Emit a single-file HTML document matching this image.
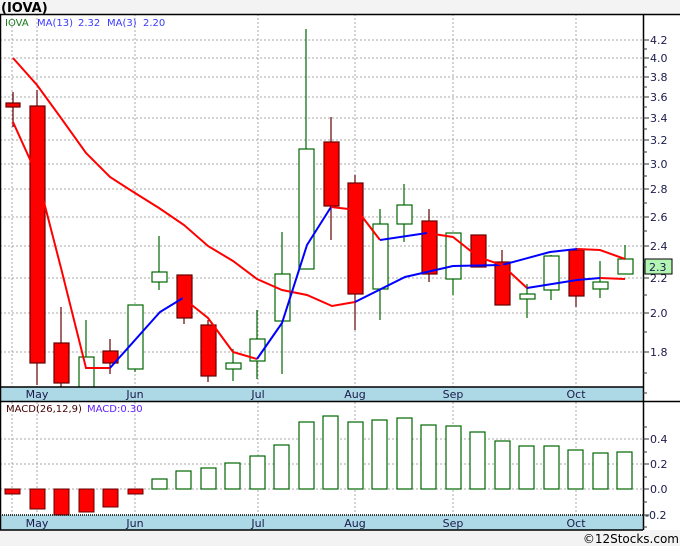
<!DOCTYPE html><html><head><style>body{margin:0;background:#f3f3f3}svg{display:block;font-family:"DejaVu Sans","Liberation Sans",sans-serif}</style></head><body>
<svg width="680" height="546" xmlns="http://www.w3.org/2000/svg">
<rect width="680" height="546" fill="#f3f3f3"/>
<text x="1" y="12" font-size="13" font-weight="bold" fill="#000">(IOVA)</text>
<rect x="0" y="14" width="680" height="516" fill="#fff"/>
<g stroke="#aaa" stroke-dasharray="2,2" stroke-width="1">
<line x1="0" x2="643" y1="40" y2="40"/><line x1="0" x2="643" y1="58" y2="58"/><line x1="0" x2="643" y1="77" y2="77"/><line x1="0" x2="643" y1="97" y2="97"/><line x1="0" x2="643" y1="118" y2="118"/><line x1="0" x2="643" y1="140" y2="140"/><line x1="0" x2="643" y1="164" y2="164"/><line x1="0" x2="643" y1="189" y2="189"/><line x1="0" x2="643" y1="217" y2="217"/><line x1="0" x2="643" y1="246" y2="246"/><line x1="0" x2="643" y1="278" y2="278"/><line x1="0" x2="643" y1="313" y2="313"/><line x1="0" x2="643" y1="352" y2="352"/>
<line x1="12" x2="12" y1="14" y2="387"/><line x1="37" x2="37" y1="14" y2="387"/><line x1="135" x2="135" y1="14" y2="387"/><line x1="258" x2="258" y1="14" y2="387"/><line x1="355" x2="355" y1="14" y2="387"/><line x1="453" x2="453" y1="14" y2="387"/><line x1="576" x2="576" y1="14" y2="387"/>
<line x1="0" x2="643" y1="439" y2="439"/><line x1="0" x2="643" y1="464" y2="464"/><line x1="0" x2="643" y1="489" y2="489"/>
<line x1="12" x2="12" y1="402" y2="515"/><line x1="37" x2="37" y1="402" y2="515"/><line x1="135" x2="135" y1="402" y2="515"/><line x1="258" x2="258" y1="402" y2="515"/><line x1="355" x2="355" y1="402" y2="515"/><line x1="453" x2="453" y1="402" y2="515"/><line x1="576" x2="576" y1="402" y2="515"/>
</g>
<text x="5" y="26" font-size="10" fill="#1a7a1a">IOVA</text>
<text x="37" y="26" font-size="10" fill="#3a3aff">MA(13)</text><text x="78" y="26" font-size="10" fill="#3a3aff">2.32</text>
<text x="107" y="26" font-size="10" fill="#3a3aff">MA(3)</text><text x="143" y="26" font-size="10" fill="#3a3aff">2.20</text>
<g stroke-width="1.2">
<g stroke="#600" fill="#f00">
<line x1="13" x2="13" y1="92" y2="127"/><rect x="6" y="103" width="14" height="4"/>
<line x1="37" x2="37" y1="90" y2="385"/><rect x="30" y="106" width="15" height="257"/>
<line x1="61" x2="61" y1="307" y2="387"/><rect x="54" y="343" width="15" height="40"/>
<line x1="110" x2="110" y1="339" y2="374"/><rect x="103" y="351" width="15" height="12"/>
<line x1="184" x2="184" y1="275" y2="324"/><rect x="177" y="275" width="15" height="43"/>
<line x1="208" x2="208" y1="320" y2="382"/><rect x="201" y="325" width="15" height="51"/>
<line x1="331" x2="331" y1="117" y2="240"/><rect x="324" y="142" width="15" height="64"/>
<line x1="355" x2="355" y1="175" y2="330"/><rect x="348" y="183" width="15" height="111"/>
<line x1="429" x2="429" y1="209" y2="282"/><rect x="422" y="221" width="15" height="53"/>
<line x1="478" x2="478" y1="235" y2="267"/><rect x="471" y="235" width="15" height="32"/>
<line x1="502" x2="502" y1="250" y2="305"/><rect x="495" y="262" width="15" height="43"/>
<line x1="576" x2="576" y1="250" y2="307"/><rect x="569" y="250" width="15" height="46"/>
</g>
<g stroke="#060" fill="#fff">
<line x1="86" x2="86" y1="320" y2="387"/><rect x="79" y="357" width="15" height="32"/>
<line x1="135" x2="135" y1="305" y2="372"/><rect x="128" y="305" width="15" height="64"/>
<line x1="159" x2="159" y1="236" y2="290"/><rect x="152" y="272" width="15" height="10"/>
<line x1="233" x2="233" y1="349" y2="381"/><rect x="226" y="363" width="15" height="6"/>
<line x1="257" x2="257" y1="310" y2="379"/><rect x="250" y="339" width="15" height="22"/>
<line x1="282" x2="282" y1="232" y2="374"/><rect x="275" y="274" width="15" height="47"/>
<line x1="306" x2="306" y1="29" y2="269"/><rect x="299" y="149" width="15" height="120"/>
<line x1="380" x2="380" y1="209" y2="320"/><rect x="373" y="224" width="15" height="65"/>
<line x1="404" x2="404" y1="184" y2="242"/><rect x="397" y="205" width="15" height="19"/>
<line x1="453" x2="453" y1="233" y2="295"/><rect x="446" y="233" width="15" height="46"/>
<line x1="527" x2="527" y1="284" y2="318"/><rect x="520" y="294" width="15" height="5"/>
<line x1="551" x2="551" y1="255" y2="300"/><rect x="544" y="256" width="15" height="34"/>
<line x1="600" x2="600" y1="261" y2="298"/><rect x="593" y="282" width="15" height="7"/>
<line x1="625" x2="625" y1="245" y2="259"/><rect x="618" y="259" width="15" height="15"/>
</g></g>
<g fill="none" stroke-width="2">
<polyline stroke="#f00" points="13,58 37,85 61,118 86,153 110,177 135,193 159,208 184,225 208,246 233,261 257,279 282,290 307,295 332,306 355,302"/>
<polyline stroke="#00f" points="355,302 405,277 453,266 502,265 550,252 577,249"/>
<polyline stroke="#f00" points="577,249 600,250 625,259"/>
<polyline stroke="#f00" points="13,122 37,175 61,268 86,368 110,368"/>
<polyline stroke="#00f" points="110,368 160,312 183,298"/>
<polyline stroke="#f00" points="183,298 208,318 233,352 257,359"/>
<polyline stroke="#00f" points="257,359 282,323 307,245 331,207"/>
<polyline stroke="#f00" points="331,207 357,210 380,240"/>
<polyline stroke="#00f" points="380,240 427,233"/>
<polyline stroke="#f00" points="427,233 453,237 472,252 487,260 502,265 527,288"/>
<polyline stroke="#00f" points="527,288 577,280 600,278"/>
<polyline stroke="#f00" points="600,278 625,279"/>
</g>
<rect x="0" y="387" width="643" height="14" fill="#add8e6"/>
<rect x="0" y="515" width="643" height="15" fill="#add8e6"/>
<g font-size="11" fill="#1a1a4a" text-anchor="middle">
<text x="37" y="398">May</text><text x="135" y="398">Jun</text><text x="258" y="398">Jul</text><text x="355" y="398">Aug</text><text x="453" y="398">Sep</text><text x="576" y="398">Oct</text>
<text x="37" y="527">May</text><text x="135" y="527">Jun</text><text x="258" y="527">Jul</text><text x="355" y="527">Aug</text><text x="453" y="527">Sep</text><text x="576" y="527">Oct</text>
</g>
<text x="6" y="412" font-size="10" fill="#400">MACD(26,12,9)</text><text x="87" y="412" font-size="10" fill="#6020ff">MACD:0.30</text>
<g stroke="#600" fill="#f00" stroke-width="1">
<rect x="5" y="489" width="15" height="5"/><rect x="30" y="489" width="15" height="20"/><rect x="54" y="489" width="15" height="26"/><rect x="79" y="489" width="15" height="23"/><rect x="103" y="489" width="15" height="18"/><rect x="128" y="489" width="15" height="5"/>
</g>
<g stroke="#060" fill="#fff" stroke-width="1.2">
<rect x="152" y="479" width="15" height="10"/><rect x="176" y="471" width="15" height="18"/><rect x="201" y="468" width="15" height="21"/><rect x="225" y="463" width="15" height="26"/><rect x="250" y="456" width="15" height="33"/><rect x="274" y="445" width="15" height="44"/><rect x="299" y="422" width="15" height="67"/><rect x="323" y="416" width="15" height="73"/><rect x="348" y="422" width="15" height="67"/><rect x="372" y="420" width="15" height="69"/><rect x="397" y="418" width="15" height="71"/><rect x="421" y="425" width="15" height="64"/><rect x="446" y="426" width="15" height="63"/><rect x="470" y="432" width="15" height="57"/><rect x="495" y="441" width="15" height="48"/><rect x="519" y="446" width="15" height="43"/><rect x="544" y="446" width="15" height="43"/><rect x="568" y="450" width="15" height="39"/><rect x="593" y="453" width="15" height="36"/><rect x="617" y="452" width="15" height="37"/>
</g>
<g stroke="#000" stroke-width="1.5" fill="none">
<line x1="0" x2="680" y1="14.5" y2="14.5"/>
<line x1="643.5" x2="643.5" y1="14" y2="530"/>
<line x1="0" x2="643" y1="387" y2="387"/>
<line x1="0" x2="680" y1="401.5" y2="401.5"/>
<line x1="0" x2="643" y1="515" y2="515" stroke-dasharray="1,1"/>
<line x1="0" x2="643" y1="530" y2="530"/>
<line x1="0.5" x2="0.5" y1="14" y2="530"/>
</g>
<g stroke="#333" stroke-width="1">
<path d="M643 40h6M643 49h4M643 58h6M643 67h4M643 77h6M643 87h4M643 97h6M643 107h4M643 118h6M643 129h4M643 140h6M643 152h4M643 164h6M643 176h4M643 189h6M643 203h4M643 217h6M643 231h4M643 246h6M643 262h4M643 278h6M643 295h4M643 313h6M643 332h4M643 352h6M643 373h4M643 393h4"/>
<path d="M643 427h4M643 439h6M643 452h4M643 464h6M643 477h4M643 489h6M643 502h4M643 515h6M643 527h4"/>
</g>
<g font-size="11" fill="#1a1a4a">
<text x="650" y="44">4.2</text><text x="650" y="62">4.0</text><text x="650" y="81">3.8</text><text x="650" y="101">3.6</text><text x="650" y="122">3.4</text><text x="650" y="144">3.2</text><text x="650" y="168">3.0</text><text x="650" y="193">2.8</text><text x="650" y="221">2.6</text><text x="650" y="250">2.4</text><text x="650" y="282">2.2</text><text x="650" y="317">2.0</text><text x="650" y="356">1.8</text>
<text x="650" y="443">0.4</text><text x="650" y="468">0.2</text><text x="650" y="493">0.0</text><text x="645" y="519">-0.2</text>
</g>
<rect x="645" y="259" width="27" height="15" fill="#b3f5b3" stroke="#000" stroke-width="1"/>
<text x="649" y="271" font-size="11" fill="#1a1a4a">2.3</text>
<text x="679" y="543" font-size="12" fill="#000" text-anchor="end">©12Stocks.com</text>
</svg></body></html>
